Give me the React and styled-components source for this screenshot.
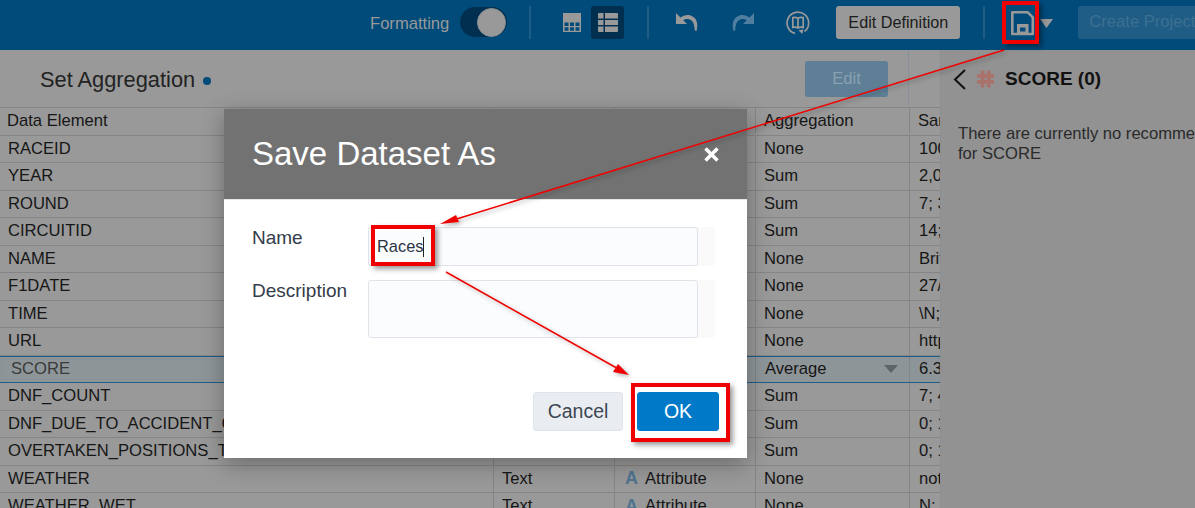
import React from "react";
import styled, { createGlobalStyle } from "styled-components";

const Global = createGlobalStyle`
  html, body { margin: 0; padding: 0; background: #999; }
  body { width: 1195px; height: 508px; overflow: hidden; font-family: "Liberation Sans", Arial, sans-serif; color: #161616; }
  * { box-sizing: border-box; }
`;

const Page = styled.div`
  position: relative;
  width: 1195px;
  height: 508px;
  overflow: hidden;
  background: #999;
`;

const TopBar = styled.header`
  height: 50px;
  background: #014b7b;
  display: flex;
  align-items: center;
  padding-left: 370px;
  white-space: nowrap;
  overflow: hidden;
  & > svg { flex: none; }
`;

const BarLabel = styled.span`
  font-size: 16.6px;
  color: #999;
  margin: -2px 11px 0 0;
  flex: none;
`;

const Toggle = styled.div`
  width: 47px;
  height: 30px;
  border-radius: 15px;
  background: #012f4f;
  display: flex;
  justify-content: flex-end;
  align-items: center;
  padding-right: 1px;
  margin: -6px 22px 0 0;
  flex: none;
`;

const Knob = styled.div`
  width: 29px;
  height: 29px;
  border-radius: 50%;
  background: #999;
  border: 1px solid #8a8f93;
`;

const Divider = styled.div`
  width: 2px;
  height: 33px;
  flex: none;
  background: #1f5d87;
  margin: ${(p) => p.$m || "0"};
`;

const IconButton = styled.div`
  width: 33px;
  height: 33px;
  flex: none;
  border-radius: 3px;
  display: flex;
  align-items: center;
  justify-content: center;
  background: ${(p) => (p.$active ? "#012f4f" : "transparent")};
  margin: ${(p) => p.$m || "0"};
`;

const EditDefinition = styled.div`
  width: 124px;
  height: 33px;
  flex: none;
  border-radius: 3px;
  background: #999;
  color: #1c1c1c;
  font-size: 16.2px;
  display: flex;
  align-items: center;
  justify-content: center;
  margin: -6px 0 0 26px;
`;

const CreateProject = styled.div`
  width: 130px;
  height: 33px;
  flex: none;
  border-radius: 3px;
  background: #1f5d87;
  color: #3d6f90;
  font-size: 16.6px;
  display: flex;
  align-items: center;
  padding-left: 11px;
  margin: -6px 0 0 25px;
`;

const Body = styled.div`
  display: flex;
  height: 458px;
`;

const Left = styled.div`
  width: 940px;
  flex: none;
  overflow: hidden;
`;

const TitleBar = styled.div`
  height: 57px;
  display: flex;
  align-items: center;
  padding: 2px 0 0 40px;
  position: relative;
`;

const Title = styled.h1`
  margin: 0;
  font-size: 21.8px;
  font-weight: 400;
  color: #222;
  display: flex;
  align-items: center;
  gap: 8px;
`;

const Dot = styled.span`
  width: 8px;
  height: 8px;
  border-radius: 50%;
  background: #014b7b;
  margin-top: 2px;
`;

const EditButton = styled.div`
  position: absolute;
  left: 805px;
  top: 11px;
  width: 83px;
  height: 36px;
  border-radius: 3px;
  background: #5e7f96;
  color: #8ba1b1;
  font-size: 16.6px;
  display: flex;
  align-items: center;
  justify-content: center;
`;

const TitleRule = styled.div`
  position: absolute;
  left: 908px;
  top: 0;
  width: 1px;
  height: 56px;
  background: #8a9097;
`;

const Row = styled.div`
  display: grid;
  grid-template-columns: 493px 121px 141px 154px 31px;
  height: ${(p) => p.$h || 27.5}px;
  align-items: center;
  font-size: 16.6px;
  color: #161616;
  border-bottom: 1px solid #858585;
  background: ${(p) => (p.$selected ? "#8e9598" : "transparent")};
  ${(p) => p.$header && "border-top: 1px solid #858585; padding-bottom: 1px;"}
  ${(p) => p.$selected && "border-bottom: 1px solid #1f5d87; border-top: 1px solid #1f5d87;"}
`;

const Cell = styled.div`
  height: 100%;
  display: flex;
  align-items: center;
  padding-left: ${(p) => p.$pad ?? 8}px;
  white-space: nowrap;
  overflow: hidden;
  border-left: ${(p) => (p.$first ? "none" : "1px solid #858585")};
  gap: 6px;
`;

const ScoreCell = styled(Cell)`
  color: #3a3a3a;
  margin: 2px 0 2px 1px;
  height: calc(100% - 4px);
  border: 1px solid #8a9194;
  border-radius: 2px;
  padding-left: 9px;
`;

const AggCell = styled(Cell)`
  justify-content: space-between;
  padding-right: 11px;
  padding-left: 9px;
`;

const Caret = styled.span`
  width: 0;
  height: 0;
  border-left: 7px solid transparent;
  border-right: 7px solid transparent;
  border-top: 8px solid #5f6467;
`;

const AttrIcon = styled.span`
  font-weight: 700;
  font-size: 18px;
  color: #4f7490;
  width: 14px;
`;

const Side = styled.aside`
  flex: 1;
  background: #929292;
  border-left: 1px solid #8a8f93;
  padding: 17px 0 0 12px;
  white-space: nowrap;
  overflow: hidden;
`;

const SideHead = styled.div`
  display: flex;
  align-items: center;
  height: 24px;
  font-size: 19px;
  font-weight: 700;
  color: #111;
  gap: 11px;
`;

const SideText = styled.p`
  margin: 33px 0 0 5px;
  font-size: 16.6px;
  line-height: 20px;
  color: #2a2a2a;
`;

const Modal = styled.div`
  position: absolute;
  left: 224px;
  top: 109px;
  width: 523px;
  height: 349px;
  background: #fff;
  box-shadow: 0 6px 22px rgba(0, 0, 0, 0.3);
  display: flex;
  flex-direction: column;
`;

const ModalHead = styled.div`
  height: 91px;
  flex: none;
  background: #727272;
  color: #fff;
  display: flex;
  align-items: center;
  justify-content: space-between;
  padding: 0 28px;
  border-bottom: 1px solid #e6e6e6;
`;

const ModalTitle = styled.h2`
  margin: 0;
  font-size: 33px;
  font-weight: 400;
`;

const ModalBody = styled.div`
  flex: 1;
  padding: 27px 32px 0 28px;
  display: flex;
  flex-direction: column;
`;

const Field = styled.div`
  display: flex;
  margin-bottom: 14px;
`;

const FieldLabel = styled.label`
  width: 116px;
  flex: none;
  font-size: 19px;
  line-height: 22px;
  color: #333c4a;
`;

const Input = styled.div`
  width: 330px;
  height: ${(p) => p.$h}px;
  background: #fbfcfe;
  border: 1px solid #dfe4ea;
  border-radius: 3px;
  box-shadow: 17px 0 0 #fafafa;
  font-size: 16.4px;
  color: #2b3442;
  display: flex;
  align-items: center;
  padding-left: 8px;
`;

const Cursor = styled.span`
  width: 1px;
  height: 20px;
  background: #222;
`;

const ModalFoot = styled.div`
  display: flex;
  justify-content: flex-end;
  gap: 14px;
  margin: 40px -4px 0 0;
`;

const CancelBtn = styled.div`
  width: 90px;
  height: 39px;
  background: #e9edf1;
  border: 1px solid #dfe4ea;
  border-radius: 3px;
  color: #3d4653;
  font-size: 19.5px;
  display: flex;
  align-items: center;
  justify-content: center;
`;

const OkBtn = styled(CancelBtn)`
  width: 82px;
  background: #0079c8;
  border-color: #0079c8;
  color: #fff;
`;

const Callout = styled.div`
  position: absolute;
  left: ${(p) => p.$x}px;
  top: ${(p) => p.$y}px;
  width: ${(p) => p.$w}px;
  height: ${(p) => p.$h}px;
  border: 4px solid #f00000;
  box-shadow: 3px 3px 5px rgba(0, 0, 0, 0.4);
`;

const Arrows = styled.svg`
  position: absolute;
  left: 0;
  top: 0;
  filter: drop-shadow(2px 2px 2px rgba(0, 0, 0, 0.3));
`;

const rows = [
  ["RACEID", "None", "100"],
  ["YEAR", "Sum", "2,0"],
  ["ROUND", "Sum", "7; 3"],
  ["CIRCUITID", "Sum", "14;"],
  ["NAME", "None", "Brit"],
  ["F1DATE", "None", "27/"],
  ["TIME", "None", "\\N;"],
  ["URL", "None", "http"],
  ["SCORE", "Average", "6.3"],
  ["DNF_COUNT", "Sum", "7; 4"],
  ["DNF_DUE_TO_ACCIDENT_COUNT", "Sum", "0; 1"],
  ["OVERTAKEN_POSITIONS_TOTAL", "Sum", "0; 1"],
  ["WEATHER", "None", "not", "Text", "Attribute"],
  ["WEATHER_WET", "None", "N; 1", "Text", "Attribute"],
];

export default function App() {
  return (
    <Page>
      <Global />
      <TopBar>
        <BarLabel>Formatting</BarLabel>
        <Toggle><Knob /></Toggle>
        <Divider $m="-6px 24px 0 0" />
        <IconButton $m="-6px 3px 0 0">
          <svg width="18" height="19" viewBox="0 0 18 19">
            <path fill="#999" fillRule="evenodd" d="M0 0h18v19H0z M1.500 9.500v3.500h4v-3.500z M7 9.500v3.500h4v-3.500z M12.500 9.500v3.500h4v-3.500z M1.500 14.300v3.500h4v-3.500z M7 14.300v3.500h4v-3.500z M12.500 14.300v3.500h4v-3.500z" />
          </svg>
        </IconButton>
        <IconButton $active $m="-6px 0 0 0">
          <svg width="20" height="19" viewBox="0 0 20 19">
            <path fill="#999" d="M1 0h4.500v5.500H0V1a1 1 0 0 1 1-1z M7 0h12a1 1 0 0 1 1 1v4.500H7z M0 7h5.500v5H0z M7 7h13v5H7z M0 13.500h5.500V19H1a1 1 0 0 1-1-1z M7 13.500h13V18a1 1 0 0 1-1 1H7z" />
          </svg>
        </IconButton>
        <Divider $m="-6px 26px 0 23px" />
        <svg width="24" height="20" viewBox="0 0 24 20" style={{ marginTop: -6 }}>
          <path fill="#999" d="M1 1v11h11L8.300 8.300C10 7 12 6.700 14 7.300c3.700 1.100 5.500 4.700 5.800 11.200l1.700.5C23 13 22.500 8 18.500 5 14.500 2 9.500 2.400 5.500 5.500z" />
        </svg>
        <svg width="24" height="20" viewBox="0 0 24 20" style={{ marginLeft: 32, marginTop: -6 }}>
          <path fill="#4f7e9e" d="M23 1v11H12l3.700-3.700C14 7 12 6.700 10 7.300 6.300 8.400 4.500 12 4.200 18.500L2.500 19C1 13 1.500 8 5.500 5c4-3 9-2.600 13 .5z" />
        </svg>
        <svg width="24" height="24" viewBox="0 0 24 24" style={{ marginLeft: 31, marginTop: -4 }} fill="none" stroke="#999" strokeWidth="1.700">
          <path d="M18.500 20.500A10.800 10.800 0 1 0 9 22.400" />
          <path d="M12 7.200C10.500 6.400 8.700 6.200 6.800 6.600v9.800c1.900-.4 3.700-.2 5.200.6 1.500-.8 3.300-1 5.200-.6V6.600c-1.900-.4-3.700-.2-5.200.6z M12 7.200V17" />
          <path fill="#999" stroke="none" d="M12.500 19.500l4 3.500 .8-4.800z" />
        </svg>
        <EditDefinition>Edit Definition</EditDefinition>
        <Divider $m="-6px 24px 0 23px" />
        <svg width="27" height="27" viewBox="0 0 27 27" fill="none" style={{ marginTop: -6 }}>
          <path stroke="#999" strokeWidth="2.600" strokeLinejoin="round" d="M3.300 3.300h15.500l5 5V25H3.300z" />
          <path fill="#999" fillRule="evenodd" d="M8 15h11.500v10H8z M11 18.500v4h5.500v-4z" />
        </svg>
        <svg width="13" height="9" viewBox="0 0 13 9" style={{ marginLeft: 4, marginTop: -4 }}>
          <path fill="#999" d="M0 0h13L6.500 9z" />
        </svg>
        <CreateProject>Create Project</CreateProject>
      </TopBar>
      <Body>
        <Left>
          <TitleBar>
            <Title>Set Aggregation <Dot /></Title>
            <EditButton>Edit</EditButton>
            <TitleRule />
          </TitleBar>
          <Row $header $h={28.5}>
            <Cell $first $pad={7}>Data Element</Cell>
            <Cell>Data Type</Cell>
            <Cell>Treat As</Cell>
            <Cell>Aggregation</Cell>
            <Cell>Sample</Cell>
          </Row>
          {rows.map(([name, agg, sample, type, treat]) => {
            const sel = name === "SCORE";
            return (
              <Row key={name} $selected={sel}>
                {sel ? <ScoreCell $first>{name}</ScoreCell> : <Cell $first>{name}</Cell>}
                <Cell>{type || "Number"}</Cell>
                <Cell $pad={10}>
                  <AttrIcon>A</AttrIcon>
                  {treat || "Attribute"}
                </Cell>
                {sel ? <AggCell>{agg}<Caret /></AggCell> : <Cell>{agg}</Cell>}
                <Cell $pad={9}>{sample}</Cell>
              </Row>
            );
          })}
        </Left>
        <Side>
          <SideHead>
            <svg width="13" height="21" viewBox="0 0 13 21" fill="none" stroke="#111" strokeWidth="2">
              <path d="M12 1L2 10.500 12 20" />
            </svg>
            <svg width="17" height="18" viewBox="0 0 18 18" fill="none" stroke="#a9736c" strokeWidth="4">
              <path d="M6 0v18M12.500 0v18M0 6h18M0 12h18" />
            </svg>
            SCORE (0)
          </SideHead>
          <SideText>
            There are currently no recommendations
            <br />
            for SCORE
          </SideText>
        </Side>
      </Body>
      <Modal>
        <ModalHead>
          <ModalTitle>Save Dataset As</ModalTitle>
          <svg width="15" height="15" viewBox="0 0 15 15" stroke="#fff" strokeWidth="3.500">
            <path d="M1.500 1.500l12 12M13.500 1.500l-12 12" />
          </svg>
        </ModalHead>
        <ModalBody>
          <Field>
            <FieldLabel>Name</FieldLabel>
            <Input $h={39}>Races<Cursor /></Input>
          </Field>
          <Field>
            <FieldLabel>Description</FieldLabel>
            <Input $h={58} />
          </Field>
          <ModalFoot>
            <CancelBtn>Cancel</CancelBtn>
            <OkBtn>OK</OkBtn>
          </ModalFoot>
        </ModalBody>
      </Modal>
      <Callout $x={1002} $y={1} $w={37} $h={43} />
      <Callout $x={371} $y={225} $w={64} $h={41} />
      <Callout $x={631} $y={383} $w={99} $h={59} />
      <Arrows width="1195" height="508" viewBox="0 0 1195 508">
        <path stroke="#f00000" strokeWidth="1.500" fill="none" d="M1004 50L450 221" />
        <path fill="#f00000" d="M440 224L456 215 459 222z" />
        <path stroke="#f00000" strokeWidth="1.500" fill="none" d="M446 272L622 371" />
        <path fill="#f00000" d="M629 375L613 372 618 364z" />
      </Arrows>
    </Page>
  );
}
